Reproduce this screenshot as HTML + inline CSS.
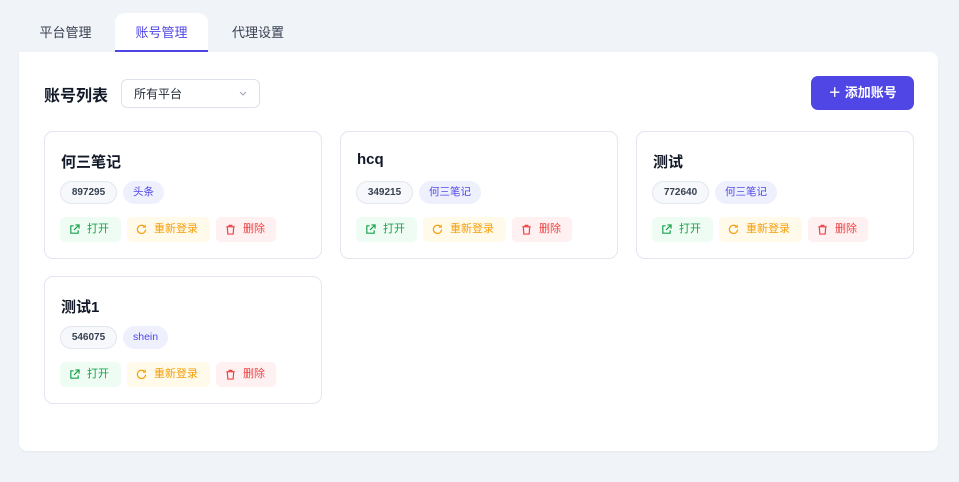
<!DOCTYPE html>
<html><head><meta charset="utf-8"><style>
*{box-sizing:border-box;margin:0;padding:0}
body{width:959px;height:482px;background:#f0f3f8;font-family:"Liberation Sans","Noto Sans CJK SC",sans-serif;position:relative;overflow:hidden}
.tab{position:absolute;top:13px;height:39px;font-size:13px;color:#374151;line-height:40px;text-align:center}
.tab.on{background:#fff;border-radius:10px 10px 0 0;color:#4f46e5;border-bottom:2px solid #4f46e5}
.panel{position:absolute;left:19px;top:52px;width:919px;height:399px;background:#fff;border-radius:0 8px 8px 8px;box-shadow:0 1px 2px rgba(0,0,0,.05)}
.h{position:absolute;left:44px;top:82px;font-size:16px;font-weight:bold;color:#111827}
.sel{position:absolute;left:121px;top:79px;width:139px;height:29px;border:1px solid #dde2ea;border-radius:6px;font-size:12px;color:#1f2937;padding-left:12px;line-height:28px}
.sel svg{position:absolute;right:12px;top:11px}
.add{position:absolute;left:811px;top:76px;width:103px;height:34px;background:#4f46e5;border-radius:7px;color:#fff;font-size:13px;font-weight:bold;line-height:34px;text-align:center}
.card{position:absolute;width:278px;height:128px;border:1px solid #e2e6ee;border-radius:9px;background:#fff}
.t{position:absolute;left:16px;top:19px;font-size:15px;font-weight:bold;color:#111827}
.tag{position:absolute;top:49px;height:23px;border-radius:12px;font-size:10.5px;line-height:22px;padding:0 10px}
.id{left:15px;width:57px;padding:0;text-align:center;background:#f7f8fb;border:1px solid #e2e6ee;color:#374151;font-weight:bold;font-size:10px}
.pl{left:78px;background:#eef0fe;color:#4f46e5}
.b{position:absolute;top:85px;height:25px;border-radius:5px;font-size:11px;line-height:25px;padding-left:27px}
.b svg{position:absolute;left:9px;top:7px}
.o{left:15px;width:61px;background:#effcf3;color:#16a34a}
.r{left:82px;width:83px;background:#fffaea;color:#f59e0b}
.d{left:171px;width:60px;background:#fff0f1;color:#ef4444}
</style></head><body>
<div class="tab" style="left:22px;width:87px">平台管理</div>
<div class="tab on" style="left:115px;width:93px">账号管理</div>
<div class="tab" style="left:212px;width:92px">代理设置</div>
<div class="panel"></div>
<div class="h">账号列表</div>
<div class="sel">所有平台<svg width="8" height="5" viewBox="0 0 8 5"><path d="M1 1l3 3 3-3" fill="none" stroke="#9ca3af" stroke-width="1"/></svg></div>
<div class="add">＋ 添加账号</div>

<div class="card" style="left:44px;top:131px"><div class="t">何三笔记</div><div class="tag id">897295</div><div class="tag pl">头条</div>
<div class="b o"><svg width="11" height="11" viewBox="0 0 12 12" fill="none" stroke="currentColor" stroke-width="1.3"><path d="M5 2H2v8h8V7M7 1h4v4M11 1L5.5 6.5"/></svg>打开</div>
<div class="b r"><svg width="11" height="11" viewBox="0 0 12 12" fill="none" stroke="currentColor" stroke-width="1.3"><path d="M10.5 6A4.5 4.5 0 1 1 9 2.5M10 1v2.5H7.5"/></svg>重新登录</div>
<div class="b d"><svg width="11" height="11" viewBox="0 0 12 12" fill="none" stroke="currentColor" stroke-width="1.3"><path d="M1.5 3h9M4.5 3V1.5h3V3M2.5 3l.6 8h5.8l.6-8"/></svg>删除</div></div>

<div class="card" style="left:340px;top:131px"><div class="t">hcq</div><div class="tag id">349215</div><div class="tag pl">何三笔记</div>
<div class="b o"><svg width="11" height="11" viewBox="0 0 12 12" fill="none" stroke="currentColor" stroke-width="1.3"><path d="M5 2H2v8h8V7M7 1h4v4M11 1L5.5 6.5"/></svg>打开</div>
<div class="b r"><svg width="11" height="11" viewBox="0 0 12 12" fill="none" stroke="currentColor" stroke-width="1.3"><path d="M10.5 6A4.5 4.5 0 1 1 9 2.5M10 1v2.5H7.5"/></svg>重新登录</div>
<div class="b d"><svg width="11" height="11" viewBox="0 0 12 12" fill="none" stroke="currentColor" stroke-width="1.3"><path d="M1.5 3h9M4.5 3V1.5h3V3M2.5 3l.6 8h5.8l.6-8"/></svg>删除</div></div>

<div class="card" style="left:636px;top:131px"><div class="t">测试</div><div class="tag id">772640</div><div class="tag pl">何三笔记</div>
<div class="b o"><svg width="11" height="11" viewBox="0 0 12 12" fill="none" stroke="currentColor" stroke-width="1.3"><path d="M5 2H2v8h8V7M7 1h4v4M11 1L5.5 6.5"/></svg>打开</div>
<div class="b r"><svg width="11" height="11" viewBox="0 0 12 12" fill="none" stroke="currentColor" stroke-width="1.3"><path d="M10.5 6A4.5 4.5 0 1 1 9 2.5M10 1v2.5H7.5"/></svg>重新登录</div>
<div class="b d"><svg width="11" height="11" viewBox="0 0 12 12" fill="none" stroke="currentColor" stroke-width="1.3"><path d="M1.5 3h9M4.5 3V1.5h3V3M2.5 3l.6 8h5.8l.6-8"/></svg>删除</div></div>

<div class="card" style="left:44px;top:276px"><div class="t">测试1</div><div class="tag id">546075</div><div class="tag pl">shein</div>
<div class="b o"><svg width="11" height="11" viewBox="0 0 12 12" fill="none" stroke="currentColor" stroke-width="1.3"><path d="M5 2H2v8h8V7M7 1h4v4M11 1L5.5 6.5"/></svg>打开</div>
<div class="b r"><svg width="11" height="11" viewBox="0 0 12 12" fill="none" stroke="currentColor" stroke-width="1.3"><path d="M10.5 6A4.5 4.5 0 1 1 9 2.5M10 1v2.5H7.5"/></svg>重新登录</div>
<div class="b d"><svg width="11" height="11" viewBox="0 0 12 12" fill="none" stroke="currentColor" stroke-width="1.3"><path d="M1.5 3h9M4.5 3V1.5h3V3M2.5 3l.6 8h5.8l.6-8"/></svg>删除</div></div>
</body></html>
